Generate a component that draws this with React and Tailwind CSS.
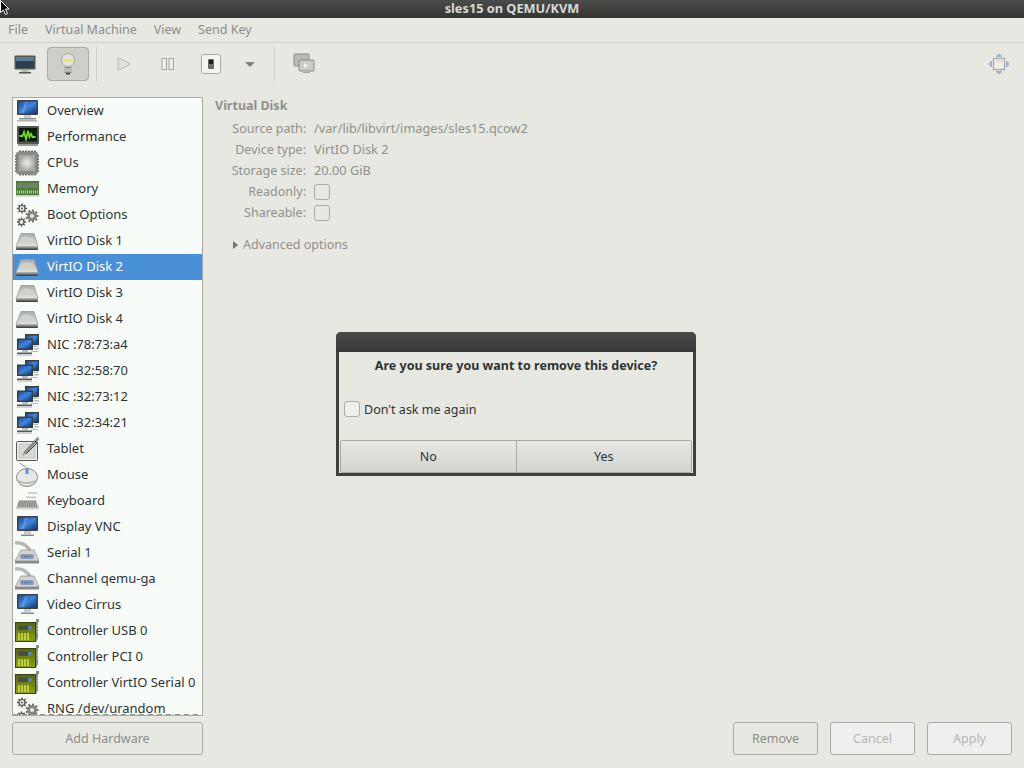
import React from 'react'

const Defs = () => (
  <svg width="0" height="0" className="absolute">
    <defs>
      <linearGradient id="scr" x1="0" y1="0" x2="1" y2="1">
        <stop offset="0" stopColor="#1b4ea6" />
        <stop offset="0.5" stopColor="#3f86de" />
        <stop offset="1" stopColor="#0f3477" />
      </linearGradient>
      <radialGradient id="chip"><stop offset="0" stopColor="#f0f0ee" /><stop offset="1" stopColor="#a5a7a2" /></radialGradient>
      <linearGradient id="dsk" x1="0" y1="0" x2="0" y2="1"><stop offset="0" stopColor="#a9aba6" /><stop offset="1" stopColor="#e2e3df" /></linearGradient>
      <linearGradient id="dskb" x1="0" y1="0" x2="0" y2="1"><stop offset="0" stopColor="#b0b2ad" /><stop offset="1" stopColor="#2e302d" /></linearGradient>
      <linearGradient id="card" x1="0" y1="0" x2="0" y2="1"><stop offset="0" stopColor="#55660c" /><stop offset="1" stopColor="#8ba314" /></linearGradient>
    </defs>
  </svg>
)

const Monitor = ({ base = false }) => (
  <svg width="26" height="26" viewBox="0 0 26 26">
    <rect x="3" y="2" width="21" height="15" rx="1" fill="#3f4240" />
    <rect x="4.500" y="3.500" width="18" height="12" fill="url(#scr)" />
    <path d="M11 4l3 0-4 11h-3z" fill="#7fb0ee" opacity="0.45" />
    <path d="M10 17h7v3h-7z" fill="#c9cbc6" />
    {base ? (
      <>
        <path d="M5 20h17v1.500h-17z" fill="#888a85" />
        <path d="M3 22h20v1.500h-20z" fill="#b0b2ad" />
      </>
    ) : (
      <path d="M7 20.500h13v1.500h-13z" fill="#888a85" />
    )}
  </svg>
)

const Perf = () => (
  <svg width="26" height="26" viewBox="0 0 26 26">
    <rect x="3" y="2" width="22" height="18" rx="1" fill="#555753" />
    <rect x="5" y="4" width="18" height="13.500" fill="#0d1a0b" />
    <path d="M5.500 12h3l1.500-4 2 7 2-8 1.500 6 1.500-3 1.500 3h3" fill="none" stroke="#6fdc28" strokeWidth="1.800" />
    <rect x="4" y="20" width="20" height="2" fill="#9a9c97" />
  </svg>
)

const Cpu = () => (
  <svg width="26" height="26" viewBox="0 0 26 26">
    <rect x="2" y="1.500" width="22" height="23" rx="3" fill="#8a8c87" />
    <path d="M1 6h1.500M1 9h1.500M1 12h1.500M1 15h1.500M1 18h1.500M1 21h1.500M23.500 6h1.500M23.500 9h1.500M23.500 12h1.500M23.500 15h1.500M23.500 18h1.500M23.500 21h1.500M6 .5v1.500M9 .5v1.500M12 .5v1.500M15 .5v1.500M18 .5v1.500M21 .5v1.500M6 24v1.500M9 24v1.500M12 24v1.500M15 24v1.500M18 24v1.500M21 24v1.500" stroke="#55574f" strokeWidth="1.500" />
    <rect x="5" y="5" width="16" height="16" fill="url(#chip)" />
  </svg>
)

const Ram = () => (
  <svg width="26" height="26" viewBox="0 0 26 26">
    <rect x="2" y="5" width="23" height="14" fill="#4e7a3a" />
    <rect x="3" y="7" width="21" height="5" fill="#74806e" />
    <rect x="12.500" y="6" width="1.500" height="9" fill="#35a32a" />
    <path d="M3 16h21" stroke="#d9cf63" strokeWidth="3" strokeDasharray="1 1" />
    <rect x="2" y="19" width="23" height="1.500" fill="#c8c9c5" />
  </svg>
)

// tooth outline shared by the boot options and rng icons
const gearTeeth = (cx, cy, r, n) =>
  Array.from({ length: n }, (_, i) => {
    const a = (i / n) * Math.PI * 2
    return `M${cx + Math.cos(a) * (r - 1)} ${cy + Math.sin(a) * (r - 1)}L${cx + Math.cos(a) * (r + 1.5)} ${cy + Math.sin(a) * (r + 1.5)}`
  }).join('')

const Gears = () => (
  <svg width="26" height="26" viewBox="0 0 26 26" fill="none">
    <path d={gearTeeth(8, 6.500, 3.500, 8)} stroke="#555753" strokeWidth="1.500" />
    <circle cx="8" cy="6.500" r="3" fill="#eeeeec" stroke="#555753" strokeWidth="1.200" />
    <circle cx="8" cy="6.500" r="1" fill="#555753" />
    <path d={gearTeeth(7.500, 20, 3, 8)} stroke="#555753" strokeWidth="1.500" />
    <circle cx="7.500" cy="20" r="2.500" fill="#eeeeec" stroke="#555753" strokeWidth="1.200" />
    <path d={gearTeeth(18, 14, 5, 9)} stroke="#6d6f6a" strokeWidth="2" />
    <circle cx="18" cy="14" r="5" fill="#85877f" />
    <circle cx="18" cy="14" r="2" fill="#e4e5e1" />
  </svg>
)

const Disk = () => (
  <svg width="26" height="26" viewBox="0 0 26 26">
    <path d="M7 5.500h13l4 13h-22z" fill="url(#dsk)" stroke="#9a9c97" strokeWidth="0.800" />
    <ellipse cx="13" cy="12" rx="6.500" ry="3.500" fill="#cfd1cc" />
    <path d="M2 18.500h22v2.500a1 1 0 0 1-1 1h-20a1 1 0 0 1-1-1z" fill="url(#dskb)" />
  </svg>
)

const Nic = () => (
  <svg width="26" height="26" viewBox="0 0 26 26">
    <rect x="11" y="2" width="14" height="11" fill="#3c3e3b" />
    <rect x="12.500" y="3.500" width="11" height="8" fill="url(#scr)" />
    <path d="M13 13.500h11v1.500h-11zM20 16h5v1.500h-5z" fill="#babdb6" />
    <rect x="3" y="6.500" width="16" height="11.500" fill="#3c3e3b" />
    <rect x="4.500" y="8" width="13" height="8.500" fill="url(#scr)" />
    <path d="M8 18h6v2h-6z" fill="#babdb6" />
    <path d="M3 20.500h15v1.500h-15z" fill="#555753" />
    <path d="M17 19.500h7" stroke="#babdb6" />
    <path d="M3 23h15" stroke="#a5a7a2" />
  </svg>
)

const Tablet = () => (
  <svg width="26" height="26" viewBox="0 0 26 26">
    <rect x="2.500" y="5.500" width="21" height="19" rx="1" fill="#eeeeec" stroke="#555753" />
    <rect x="5" y="8" width="16" height="14" fill="#d7d8d4" stroke="#a5a7a2" strokeWidth="0.500" />
    <path d="M23.500 1l2 2-13 14-4.500 3 2.500-5z" fill="#8a8c87" />
    <path d="M21 5l2 2-11 11" fill="none" stroke="#3c3e3b" />
  </svg>
)

const Mouse = () => (
  <svg width="26" height="26" viewBox="0 0 26 26">
    <path d="M6 1c2 3 6 2 7 6" fill="none" stroke="#888a85" />
    <ellipse cx="13" cy="15.500" rx="10.500" ry="9" fill="#e7e8e4" stroke="#888a85" />
    <path d="M3 18c4 4 16 4 20 0" fill="none" stroke="#babdb6" strokeWidth="2" />
    <path d="M13 7v5" stroke="#5a94dd" strokeWidth="3" />
  </svg>
)

const Keyboard = () => (
  <svg width="26" height="26" viewBox="0 0 26 26">
    <path d="M14 5c5-1 7 1 9 0M12 9c5 0 7 1 10 0" fill="none" stroke="#a5a7a2" />
    <path d="M5 12h17l3 8h-23z" fill="#babdb6" />
    <path d="M5 14h17M4 16h18M4 18h19" stroke="#555753" strokeDasharray="1.500 0.700" />
    <path d="M2 20h23v1.500h-23z" fill="#d3d5d0" />
  </svg>
)

const Serial = () => (
  <svg width="26" height="26" viewBox="0 0 26 26">
    <path d="M1 3c7-1 12 2 16 9" fill="none" stroke="#b6b8b3" strokeWidth="3.500" />
    <path d="M7 10h13l5 11h-24z" fill="#d3d5d0" stroke="#888a85" strokeWidth="0.700" />
    <rect x="6" y="14" width="14" height="5" rx="2" fill="#8b9bb3" />
    <path d="M8 16.500h10" stroke="#3c5a8a" strokeDasharray="1 1" />
    <path d="M1 21h24v2.500h-24z" fill="#888a85" />
  </svg>
)

const Card = () => (
  <svg width="26" height="26" viewBox="0 0 26 26">
    <rect x="1.500" y="4.500" width="20" height="19" fill="url(#card)" stroke="#39440a" />
    <rect x="4" y="7.500" width="10" height="4.500" rx="1" fill="#4a4c49" />
    <rect x="14" y="8" width="4" height="3.500" fill="#5a7fb8" />
    <path d="M5 15v7M8 15v7M11 15v7M14 15v7" stroke="#d8e04a" strokeWidth="1.500" />
    <path d="M22 1h3v3h-1v16l-2 4z" fill="#888a85" />
    <path d="M23 8h2M23 11h2M23 14h2" stroke="#eeeeec" />
  </svg>
)

const items = [
  ['Overview', <Monitor key="o" base />],
  ['Performance', <Perf key="p" />],
  ['CPUs', <Cpu key="c" />],
  ['Memory', <Ram key="m" />],
  ['Boot Options', <Gears key="b" />],
  ['VirtIO Disk 1', <Disk key="d1" />],
  ['VirtIO Disk 2', <Disk key="d2" />],
  ['VirtIO Disk 3', <Disk key="d3" />],
  ['VirtIO Disk 4', <Disk key="d4" />],
  ['NIC :78:73:a4', <Nic key="n1" />],
  ['NIC :32:58:70', <Nic key="n2" />],
  ['NIC :32:73:12', <Nic key="n3" />],
  ['NIC :32:34:21', <Nic key="n4" />],
  ['Tablet', <Tablet key="t" />],
  ['Mouse', <Mouse key="mo" />],
  ['Keyboard', <Keyboard key="k" />],
  ['Display VNC', <Monitor key="dv" />],
  ['Serial 1', <Serial key="s" />],
  ['Channel qemu-ga', <Serial key="ch" />],
  ['Video Cirrus', <Monitor key="v" />],
  ['Controller USB 0', <Card key="cu" />],
  ['Controller PCI 0', <Card key="cp" />],
  ['Controller VirtIO Serial 0', <Card key="cv" />],
  ['RNG /dev/urandom', <Gears key="r" />],
]

const details = [
  ['Source path:', '/var/lib/libvirt/images/sles15.qcow2'],
  ['Device type:', 'VirtIO Disk 2'],
  ['Storage size:', '20.00 GiB'],
  ['Readonly:', null],
  ['Shareable:', null],
]

const Check = ({ className = 'border-[#a9aaa5] bg-[#e8e8e3]' }) => (
  <span className={`block w-4 h-4 rounded-[3px] border ${className}`} />
)

const App = () => {
  return (
    <div className="relative w-[1024px] h-[768px] overflow-hidden flex flex-col bg-[#e8e8e2] font-['Noto_Sans',sans-serif] text-[12.5px] text-[#2e3436]">
      <Defs />
      {/* title bar */}
      <div className="h-[18px] shrink-0 flex items-center justify-center bg-linear-to-b from-[#4a4c49] to-[#343634] text-[#d9d9d5] text-[12.75px] font-bold">
        sles15 on QEMU/KVM
      </div>

      {/* menu */}
      <div className="h-[25px] shrink-0 flex items-center gap-[17px] pl-[8px] pt-px border-b border-[#cfcfca] text-[#8b8d88]">
        <span>File</span>
        <span>Virtual Machine</span>
        <span>View</span>
        <span>Send Key</span>
      </div>

      {/* toolbar */}
      <div className="h-[42px] shrink-0 flex items-center pl-[5px] pr-[13px]">
        <div className="w-[40px] flex justify-center">
          <svg width="24" height="24" viewBox="0 0 24 24">
            <rect x="1.500" y="3.500" width="21" height="14" rx="1" fill="#555753" />
            <rect x="3" y="5" width="18" height="11" fill="#2c3e50" />
            <path d="M3 5h18v4H3z" fill="#5d7c96" />
            <path d="M9 18h6l1 2H8z" fill="#babdb6" />
            <path d="M6 20h12v1.500H6z" fill="#555753" />
          </svg>
        </div>
        <div className="ml-[2px] w-[42px] h-[34px] flex items-center justify-center rounded-[4px] border border-[#a9aaa5] bg-[#cfcfc9]">
          <svg width="16" height="24" viewBox="0 0 16 24">
            <circle cx="8" cy="8" r="6.500" fill="#e4e4df" stroke="#a5a7a2" />
            <path d="M3.500 7.500c3 1.500 6 1.500 9 0" fill="none" stroke="#eadf50" strokeWidth="1.500" />
            <rect x="4.500" y="15" width="7" height="6" fill="#888a85" />
            <path d="M4.500 17h7M4.500 19h7" stroke="#eeeeec" />
            <rect x="6" y="21" width="4" height="1.500" fill="#3c3e3b" />
          </svg>
        </div>
        <div className="ml-[7px] mr-[7px] w-px h-[34px] bg-[#cfcfca]" />
        <div className="w-[40px] flex justify-center">
          <svg width="16" height="18" viewBox="0 0 16 18"><path d="M2 2.500l12 6.500-12 6.500z" fill="#e2e2dd" stroke="#b6b8b2" /></svg>
        </div>
        <div className="ml-[4px] w-[40px] flex justify-center">
          <svg width="16" height="14" viewBox="0 0 16 14">
            <rect x="2" y="1.500" width="4.500" height="11" fill="#eeeeec" stroke="#a5a7a2" />
            <rect x="9" y="1.500" width="4.500" height="11" fill="#eeeeec" stroke="#a5a7a2" />
          </svg>
        </div>
        <div className="ml-[3px] w-[40px] flex justify-center">
          <svg width="20" height="20" viewBox="0 0 20 20">
            <rect x="0.500" y="0.500" width="19" height="19" rx="2" fill="#f4f4f1" stroke="#a5a7a2" />
            <rect x="7" y="5" width="6" height="10" rx="1" fill="#6b6d69" />
            <rect x="8" y="6" width="4" height="4" fill="#1f201e" />
          </svg>
        </div>
        <div className="w-[38px] flex justify-center">
          <span className="block w-0 h-0 border-x-[5px] border-x-transparent border-t-[5px] border-t-[#7f817c]" />
        </div>
        <div className="ml-[5px] mr-[11px] w-px h-[34px] bg-[#cfcfca]" />
        <div className="w-[36px] flex justify-center">
          <svg width="22" height="22" viewBox="0 0 22 22">
            <rect x="1" y="1" width="15" height="12" rx="1" fill="#b9bbb6" stroke="#888a85" />
            <rect x="6" y="7" width="15" height="11" rx="1" fill="#c9cbc6" stroke="#888a85" />
            <path d="M11 10l4 2.500-4 2.500z" fill="#f4f4f1" />
            <path d="M10 19.500h7" stroke="#a5a7a2" />
          </svg>
        </div>
        <div className="ml-auto">
          <svg width="24" height="24" viewBox="0 0 24 24">
            <rect x="6.500" y="6.500" width="11" height="11" fill="#eeeeec" stroke="#a5a7a2" strokeWidth="1.200" />
            <path d="M9 9h7" stroke="#c8c9c5" />
            <path d="M9 4.500l3-2.500 3 2.500zM9 19.500l3 2.500 3-2.500zM4.500 9l-2.500 3 2.500 3zM19.500 9l2.500 3-2.500 3z" fill="#9db3d3" stroke="#9db3d3" />
          </svg>
        </div>
      </div>

      {/* body */}
      <div className="flex-1 min-h-0 flex px-[12px] pt-[12px] pb-[13px] gap-[12px]">
        <div className="w-[191px] shrink-0 flex flex-col gap-[6px]">
          <div className="relative flex-1 min-h-0 overflow-hidden border border-[#a9aaa5] bg-[#f8fcf9] text-[13px]">
            {items.map(([label, icon]) => (
              <div
                key={label}
                className={`h-[26px] flex items-center gap-[5px] pl-[1px] whitespace-nowrap ${label === 'VirtIO Disk 2' ? 'bg-[#4a90d9] text-white' : ''}`}
              >
                {icon}
                <span className="ml-[2px]">{label}</span>
              </div>
            ))}
            <div className="absolute left-0 right-0 bottom-0 h-px bg-[repeating-linear-gradient(90deg,#8f918c_0_5px,transparent_5px_9px)]" />
          </div>
          <button className="h-[33px] pt-px shrink-0 rounded-[3px] border border-[#a9aaa5] bg-[#e8e8e2] text-[#8b8d88]">Add Hardware</button>
        </div>

        <div className="flex-1 flex flex-col text-[#8f918c]">
          <div className="font-bold leading-[16px] pt-px">Virtual Disk</div>
          <div className="mt-[4px] flex flex-col">
            {details.map(([k, v]) => (
              <div key={k} className="h-[21px] flex items-center">
                <span className="w-[91px] text-right pt-[2px]">{k}</span>
                {v ? <span className="ml-[8px] text-[12.75px]">{v}</span> : <div className="ml-[8px]"><Check /></div>}
              </div>
            ))}
          </div>
          <div className="mt-[11px] pl-[18px] flex items-center gap-[5px] h-[21px]">
            <span className="block w-0 h-0 border-y-[4px] border-y-transparent border-l-[5px] border-l-[#6f716c]" />
            <span className="pt-[2px]">Advanced options</span>
          </div>
          <div className="mt-auto flex justify-end gap-[12px]">
            <button className="w-[85px] h-[33px] pt-px rounded-[3px] border border-[#a9aaa5] text-[#8b8d88]">Remove</button>
            <button className="w-[85px] h-[33px] pt-px rounded-[3px] border border-[#a9aaa5] bg-[#efefed] text-[#b5b6b2]">Cancel</button>
            <button className="w-[85px] h-[33px] pt-px rounded-[3px] border border-[#a9aaa5] bg-[#efefed] text-[#b5b6b2]">Apply</button>
          </div>
        </div>
      </div>

      {/* confirm dialog */}
      <div className="absolute left-[336px] top-[332px] w-[360px] h-[144px] flex flex-col rounded-t-[5px] overflow-hidden bg-[#3e403e] px-[3px] pb-[3px]">
        <div className="h-[20px] shrink-0 -mx-[3px] bg-linear-to-b from-[#4a4c49] to-[#363836]" />
        <div className="flex-1 flex flex-col bg-[#e8e8e2]">
          <div className="h-[27px] pt-[2px] flex items-center justify-center font-bold">Are you sure you want to remove this device?</div>
          <div className="mt-[20px] h-[20px] flex items-center gap-[4px] pl-[5px]">
            <Check className="border-[#a9aaa5] bg-[#eeeeea]" />
            <span className="pt-[2px]">Don't ask me again</span>
          </div>
          <div className="mt-auto mx-px flex h-[33px] rounded-[2px] border border-[#a9aaa5] bg-linear-to-b from-[#e6e8e5] to-[#d2d4cf]">
            <button className="flex-1 pt-px border-r border-[#a9aaa5]">No</button>
            <button className="flex-1 pt-px">Yes</button>
          </div>
        </div>
      </div>

      {/* mouse pointer */}
      <svg className="absolute left-0 top-0" width="10" height="16" viewBox="0 0 10 16">
        <path d="M0.500 0.500v12l3-2.500 2 4.500 2-1-2-4.500h3.500z" fill="#000" stroke="#fff" />
      </svg>
    </div>
  )
}

export default App
